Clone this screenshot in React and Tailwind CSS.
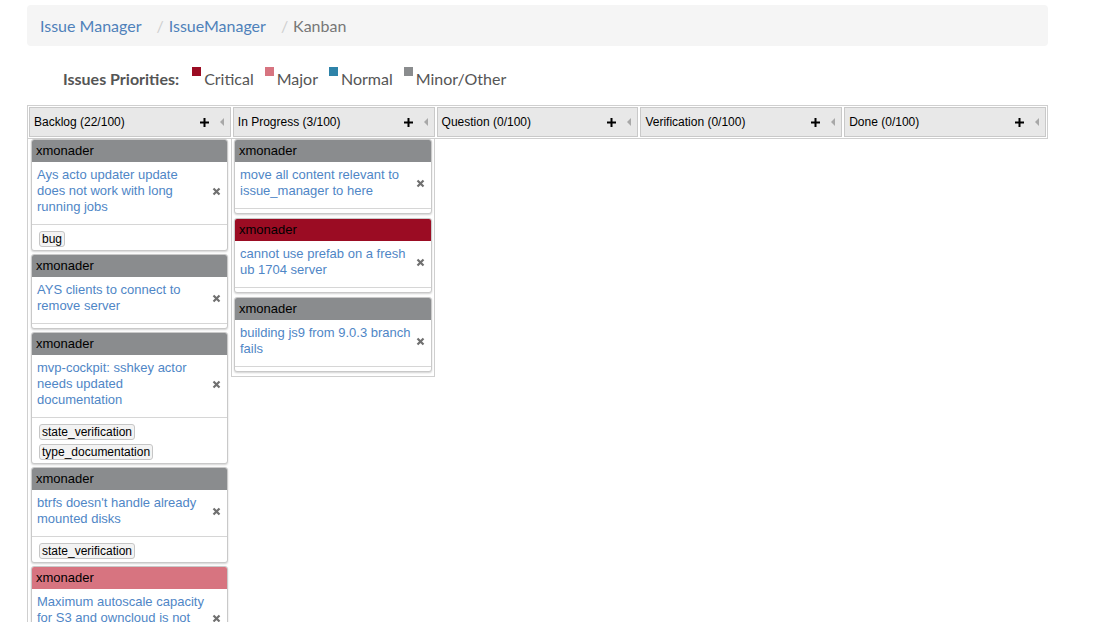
import React from "react";

// 優先級顏色
const PRIORITY = {
  critical: "bg-[#9b0c23]",
  major: "bg-[#d77480]",
  normal: "bg-[#2e83a9]",
  minor: "bg-[#8a8c8e]",
};

const COLUMNS = [
  { name: "Backlog (22/100)" },
  { name: "In Progress (3/100)" },
  { name: "Question (0/100)" },
  { name: "Verification (0/100)" },
  { name: "Done (0/100)" },
];

const BACKLOG = [
  { owner: "xmonader", prio: "minor", title: "Ays acto updater update does not work with long running jobs", tags: ["bug"] },
  { owner: "xmonader", prio: "minor", title: "AYS clients to connect to remove server", tags: [] },
  { owner: "xmonader", prio: "minor", title: "mvp-cockpit: sshkey actor needs updated documentation", tags: ["state_verification", "type_documentation"] },
  { owner: "xmonader", prio: "minor", title: "btrfs doesn't handle already mounted disks", tags: ["state_verification"] },
  { owner: "xmonader", prio: "major", title: "Maximum autoscale capacity for S3 and owncloud is not configurable", tags: ["type_bug"] },
  { owner: "xmonader", prio: "minor", title: "cockpit: portal login redirects to wrong page", tags: [] },
];

const IN_PROGRESS = [
  { owner: "xmonader", prio: "minor", title: "move all content relevant to issue_manager to here", tags: [] },
  { owner: "xmonader", prio: "critical", title: "cannot use prefab on a fresh ub 1704 server", tags: [] },
  { owner: "xmonader", prio: "minor", title: "building js9 from 9.0.3 branch fails", tags: [] },
];

function PlusIcon() {
  return (
    <svg width="9" height="9" viewBox="0 0 9 9">
      <rect x="3.5" y="0" width="2" height="9" fill="#000" />
      <rect x="0" y="3.5" width="9" height="2" fill="#000" />
    </svg>
  );
}

function CaretLeft() {
  return (
    <svg width="4" height="8" viewBox="0 0 4 8">
      <polygon points="4,0 4,8 0,4" fill="#a8a8a8" />
    </svg>
  );
}

function CloseIcon() {
  return (
    <svg width="9" height="9" viewBox="0 0 9 9">
      <path d="M1.5 1.5 L7.5 7.5 M7.5 1.5 L1.5 7.5" stroke="#707070" strokeWidth="2.2" />
    </svg>
  );
}

function IssueCard({ issue }) {
  return (
    <div className="rounded-[3px] border border-[#c9c9c9] bg-white shadow-[0_1px_2px_rgba(0,0,0,0.18)] overflow-hidden">
      <div className={`h-[22px] leading-[22px] pl-[4px] text-[13px] text-black ${PRIORITY[issue.prio]}`}>
        {issue.owner}
      </div>
      <div className="flex items-center pl-[5px] pr-[6px] pt-[5px] pb-[9px]">
        <div className="flex-1 pr-[4px] text-[13px] leading-[16px] text-[#4f86c6]">{issue.title}</div>
        <CloseIcon />
      </div>
      <div className={`border-t border-[#d6d6d6] ${issue.tags.length ? "pt-[6px] pb-[3px] pl-[7px]" : "h-[5px]"}`}>
        {issue.tags.length > 0 && (
          <div className="flex flex-col items-start gap-[4px]">
            {issue.tags.map((t) => (
              <span
                key={t}
                className="h-[16px] leading-[14px] px-[2px] border border-[#c6c6c6] rounded-[3px] bg-[#f3f3f3] text-[12px] text-black"
              >
                {t}
              </span>
            ))}
          </div>
        )}
      </div>
    </div>
  );
}

export default function App() {
  return (
    <div className="min-h-screen bg-white pt-[5px] font-['Liberation_Sans',Arial,sans-serif]">
      {/* ========== 麵包屑 ========== */}
      <div className="ml-[27px] w-[1021px] rounded-[4px] bg-[#f5f5f5] px-[13px] py-[10px] font-['Lato',sans-serif] text-[16px] leading-[21px] flex items-center">
        <span className="text-[#4f81ba]">Issue Manager</span>
        <span className="text-[#cfcfcf] pl-[15px] pr-[5px]">/</span>
        <span className="text-[#4f81ba]">IssueManager</span>
        <span className="text-[#cfcfcf] pl-[15px] pr-[5px]">/</span>
        <span className="text-[#777]">Kanban</span>
      </div>

      {/* ========== 優先級說明 ========== */}
      <div className="ml-[63px] mt-[21px] h-[22px] flex items-start font-['Lato',sans-serif] text-[16px] leading-[23px] text-[#555]">
        <span className="font-bold mr-[13px]">Issues Priorities:</span>
        {[
          ["critical", "Critical"],
          ["major", "Major"],
          ["normal", "Normal"],
          ["minor", "Minor/Other"],
        ].map(([k, label]) => (
          <span key={k} className="flex items-start mr-[11px]">
            <span className={`w-[9px] h-[9px] ${PRIORITY[k]} mr-[3px]`} />
            <span>{label}</span>
          </span>
        ))}
      </div>

      {/* ========== 看板 ========== */}
      <div className="ml-[27px] mt-[16px] w-[1021px]">
        <div className="flex gap-[2px] border border-[#cfcfcf] p-px">
          {COLUMNS.map((c) => (
            <div
              key={c.name}
              className="flex-1 h-[30px] flex items-center border border-[#c9c9c9] bg-[#e8e8e8] pl-[4px] pr-[6px] text-[12px] text-black"
            >
              <span className="flex-1">{c.name}</span>
              <PlusIcon />
              <span className="ml-[11px] flex items-center">
                <CaretLeft />
              </span>
            </div>
          ))}
        </div>

        <div className="flex items-start">
          <div className="w-[204px] border-l border-[#cfcfcf] pl-[3px] pr-[3px] flex flex-col gap-[3px]">
            {BACKLOG.map((i, idx) => (
              <IssueCard key={idx} issue={i} />
            ))}
          </div>
          <div className="w-[204px] border-x border-b border-[#cfcfcf] px-[2px] pb-[4px] flex flex-col gap-[4px]">
            {IN_PROGRESS.map((i, idx) => (
              <IssueCard key={idx} issue={i} />
            ))}
          </div>
        </div>
      </div>
    </div>
  );
}
